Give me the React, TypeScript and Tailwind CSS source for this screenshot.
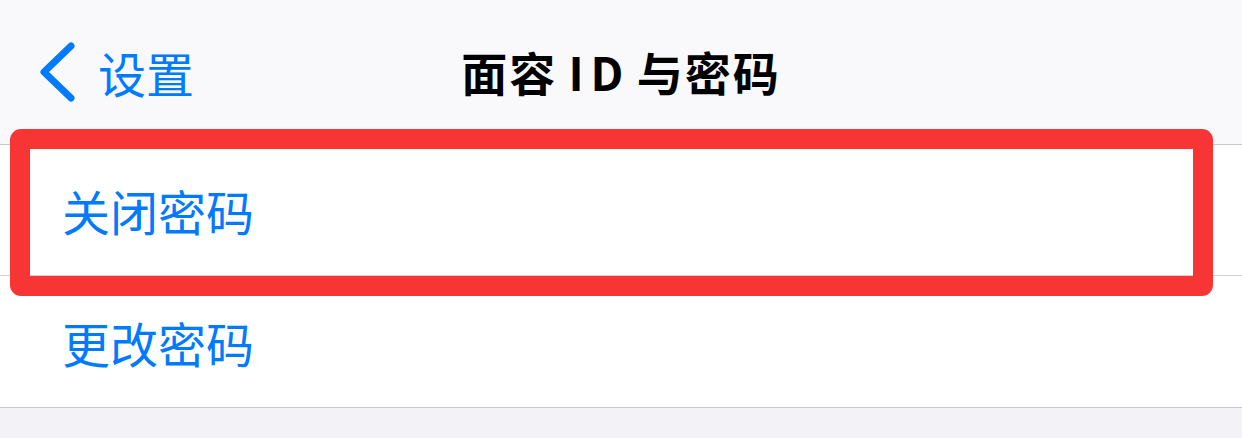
import React from 'react';

const Row: React.FC<{ label: string; last?: boolean }> = ({ label, last }) => (
  <div className={`h-[131px] flex items-center pl-[62px] ${last ? '' : 'border-b border-[#d1d1d6]'}`}>
    <span className="text-[48px] leading-none text-[#007aff]">{label}</span>
  </div>
);

export default function App() {
  return (
    <div
      className="w-[1242px] h-[438px] bg-[#f2f2f7] overflow-hidden"
      style={{ fontFamily: '"Noto Sans CJK SC", "Noto Sans", sans-serif' }}
    >
      {/* Nav bar */}
      <div className="h-[144px] bg-[#f9f9fb] grid grid-cols-[1fr_auto_1fr] items-center pb-[2px]">
        <div className="flex items-center gap-[20px] pl-[36px] pt-[2px]">
          <svg width="42" height="64" viewBox="0 0 42 64">
            <path
              d="M35 6 L8 32 L35 58"
              fill="none"
              stroke="#007aff"
              strokeWidth="7"
              strokeLinecap="round"
              strokeLinejoin="round"
            />
          </svg>
          <span className="text-[48px] leading-none text-[#007aff]">设置</span>
        </div>
        <h1 className="text-[46px] font-bold leading-none tracking-[2px] text-black">
          面容{'\u2009'}I{'\u200a'}D{'\u2009'}与密码
        </h1>
        <div />
      </div>

      {/* List */}
      <div className="relative bg-white border-t border-b border-[#c8c8cc]">
        <Row label="关闭密码" />
        <Row label="更改密码" last />
        <div className="absolute left-[10px] top-[-16px] w-[1203px] h-[167px] rounded-[11px] border-[20px] border-[#f73535]" />
      </div>
    </div>
  );
}
